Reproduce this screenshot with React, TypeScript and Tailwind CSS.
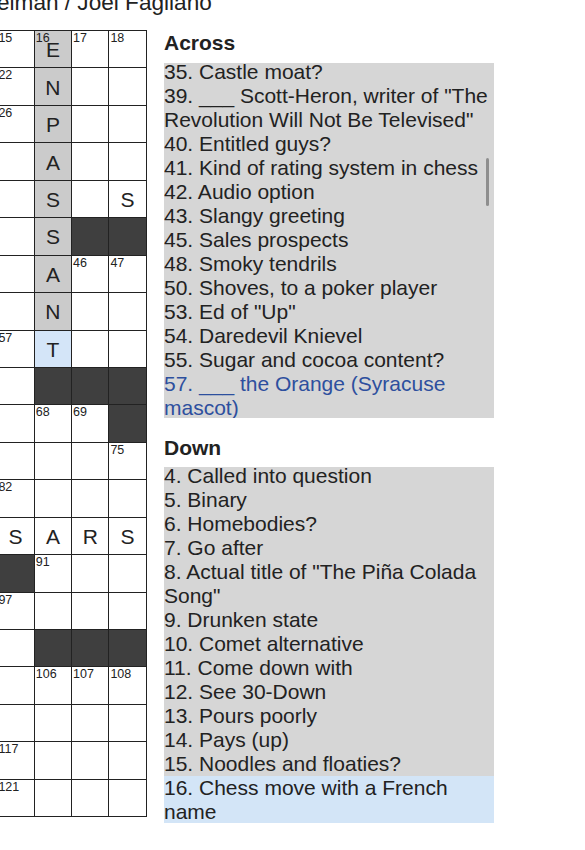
import React from "react";

type Cell = { n?: number; l?: string; s?: "hl" | "cur" | "blk" };

const B: Cell = { s: "blk" };
const E: Cell = {};

const grid: Cell[][] = [
  [{ n: 15 }, { n: 16, l: "E", s: "hl" }, { n: 17 }, { n: 18 }],
  [{ n: 22 }, { l: "N", s: "hl" }, E, E],
  [{ n: 26 }, { l: "P", s: "hl" }, E, E],
  [E, { l: "A", s: "hl" }, E, E],
  [E, { l: "S", s: "hl" }, E, { l: "S" }],
  [E, { l: "S", s: "hl" }, B, B],
  [E, { l: "A", s: "hl" }, { n: 46 }, { n: 47 }],
  [E, { l: "N", s: "hl" }, E, E],
  [{ n: 57 }, { l: "T", s: "cur" }, E, E],
  [E, B, B, B],
  [E, { n: 68 }, { n: 69 }, B],
  [E, E, E, { n: 75 }],
  [{ n: 82 }, E, E, E],
  [{ l: "S" }, { l: "A" }, { l: "R" }, { l: "S" }],
  [B, { n: 91 }, E, E],
  [{ n: 97 }, E, E, E],
  [E, B, B, B],
  [E, { n: 106 }, { n: 107 }, { n: 108 }],
  [E, E, E, E],
  [{ n: 117 }, E, E, E],
  [{ n: 121 }, E, E, E],
];

const across = [
  { t: "35. Castle moat?" },
  { t: '39. ___ Scott-Heron, writer of "The Revolution Will Not Be Televised"' },
  { t: "40. Entitled guys?" },
  { t: "41. Kind of rating system in chess" },
  { t: "42. Audio option" },
  { t: "43. Slangy greeting" },
  { t: "45. Sales prospects" },
  { t: "48. Smoky tendrils" },
  { t: "50. Shoves, to a poker player" },
  { t: '53. Ed of "Up"' },
  { t: "54. Daredevil Knievel" },
  { t: "55. Sugar and cocoa content?" },
  { t: "57. ___ the Orange (Syracuse mascot)", cross: true },
];

const down = [
  { t: "4. Called into question" },
  { t: "5. Binary" },
  { t: "6. Homebodies?" },
  { t: "7. Go after" },
  { t: '8. Actual title of "The Piña Colada Song"' },
  { t: "9. Drunken state" },
  { t: "10. Comet alternative" },
  { t: "11. Come down with" },
  { t: "12. See 30-Down" },
  { t: "13. Pours poorly" },
  { t: "14. Pays (up)" },
  { t: "15. Noodles and floaties?" },
  { t: "16. Chess move with a French name", active: true },
];

const GridCell = ({ c }: { c: Cell }) => {
  const bg =
    c.s === "blk" ? "bg-[#3f3f3f]" : c.s === "hl" ? "bg-[#cbcbcb]" : c.s === "cur" ? "bg-[#d4e5f8]" : "bg-white";
  return (
    <div className={`relative h-[37.45px] w-[37.33px] border-r border-b border-[#222] flex items-center justify-center pt-[2px] ${bg}`}>
      {c.n !== undefined && (
        <span className="absolute top-0 left-[1px] text-[12.5px] leading-[14px] text-[#222]">{c.n}</span>
      )}
      {c.l && <span className="text-[21px] leading-[24px] text-[#222]">{c.l}</span>}
    </div>
  );
};

export default function App() {
  return (
    <div className="w-[585px] h-[850px] overflow-hidden bg-white text-[#222] font-['Liberation_Sans',Arial,sans-serif]">
      <div className="-ml-[3px] -mt-[10.5px] text-[22.6px] leading-[26px] whitespace-nowrap">
        elman / Joel Fagliano
      </div>

      <div className="flex items-start mt-[14.5px]">
        <div className="-ml-[2.6px] w-[149.3px] shrink-0 border-t border-[#222]">
          {grid.map((row, r) => (
            <div key={r} className="flex">
              {row.map((c, i) => (
                <GridCell key={i} c={c} />
              ))}
            </div>
          ))}
        </div>

        <div className="ml-[17.3px] w-[330px] shrink-0">
          <h3 className="text-[21px] leading-[24px] font-bold pt-[1px]">Across</h3>
          <div className="relative mt-[8px] h-[355px] overflow-hidden bg-[#d6d6d6] text-[21px] leading-[24px]">
            <div className="-mt-[3px]">
              {across.map((c, i) => (
                <div key={i} className={c.cross ? "text-[#2d4f9e]" : ""}>
                  {c.t}
                </div>
              ))}
            </div>
            <div className="absolute right-[5px] top-[95px] w-[3px] h-[48px] rounded-full bg-[#8e8e8e]" />
          </div>

          <h3 className="mt-[18px] text-[21px] leading-[24px] font-bold">Down</h3>
          <div className="mt-[6.7px] h-[356px] overflow-hidden bg-[#d6d6d6] text-[21px] leading-[24px]">
            <div className="-mt-[3px]">
              {down.map((c, i) => (
                <div key={i} className={c.active ? "bg-[#d3e5f7]" : ""}>
                  {c.t}
                </div>
              ))}
            </div>
          </div>
        </div>
      </div>
    </div>
  );
}
